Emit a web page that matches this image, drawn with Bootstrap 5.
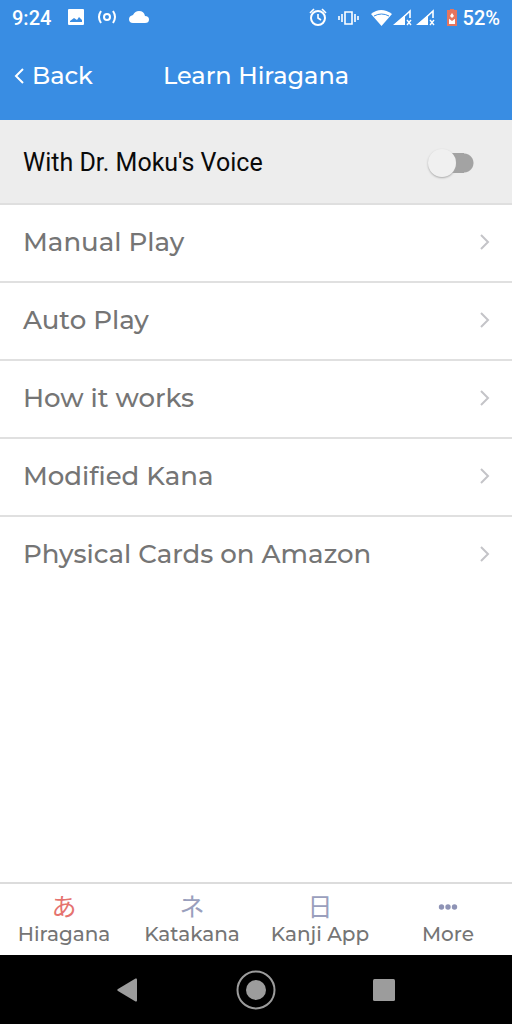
<!DOCTYPE html>
<html lang="en">
<head>
<meta charset="utf-8">
<meta name="viewport" content="width=device-width, initial-scale=1">
<title>Learn Hiragana</title>
<link href="https://cdn.jsdelivr.net/npm/bootstrap@5.3.0/dist/css/bootstrap.min.css" rel="stylesheet">
<style>
  body { font-family: Montserrat, Inter, sans-serif; font-weight: 500; color: #757575; }
  svg { display: block; flex: none; }
  .top-area { background: #398de3; color: #fff; }
  .status-bar { height: 36px; padding: 0 12px; font: 500 20px/36px Roboto, sans-serif; }
  .title-bar { height: 84px; padding: 0 14px 4px; font-size: 24px; line-height: 32px; }
  .title-bar h1 { font-size: 24px; line-height: 32px; font-weight: 500; }
  .voice-row { height: 85px; padding: 2px 38px 0 23px; background: #ededed; border-bottom: 2px solid #dfdfdf; }
  .voice-row label { font: 400 25px/32px Roboto, sans-serif; color: #0a0a0a; }
  .voice-switch { appearance: none; display: flex; align-items: center; width: 46px; height: 30px; margin: 0; border-radius: 15px; background: linear-gradient(#a3a3a3, #a3a3a3) 15px 5px / 21px 20px no-repeat, radial-gradient(circle at 36px 15px, #a3a3a3 9px, transparent 10px); }
  .voice-switch::before { content: ""; width: 28px; height: 28px; border-radius: 50%; background: #f0f0f0; box-shadow: 0 1px 2px #aaa; }
  .voice-switch:checked { transform: scaleX(-1); }
  .menu-list .list-group-item { height: 78px; padding: 0 22px 2px 23px; border-color: #e0e0e0; border-width: 0 0 2px; color: #757575; font-size: 26px; line-height: 32px; }
  .menu-list .list-group-item:last-child { height: 76px; border-bottom-width: 0; }
  .tab-bar { height: 73px; border-top: 2px solid #dcdcdc; padding-top: 9px; }
  .tab-bar a { color: #757575; font-size: 20px; line-height: 26px; }
  .tab-icon { height: 28px; font: 400 25px/25px "Noto Sans CJK JP", sans-serif; color: #9a9fbd; }
  .active .tab-icon { color: #e5736f; }
  .system-bar { height: 69px; padding: 0 64px; }
</style>
</head>
<body class="d-flex flex-column min-vh-100 bg-white">
<header class="top-area">
  <div class="status-bar d-flex align-items-center justify-content-between">
    <div class="d-flex align-items-center">
      <span>9:24</span>
      <svg class="ms-3" width="84" height="20" viewBox="0 0 84 20" fill="none" stroke="#fff" stroke-width="2">
        <path fill="#fff" stroke="none" fill-rule="evenodd" d="M2 1h14q1 0 1 1v14q0 1-1 1H2q-1 0-1-1V2q0-1 1-1Zm1 13h12v-2l-3-3-2 3-3-2-4 3Z"/>
        <circle cx="40" cy="9" r="3"/><path d="M34 3q-4 6 0 12M46 3q4 6 0 12"/>
        <path fill="#fff" stroke="none" d="M66 15q-4 0-4-4 0-3 4-4 2-4 6-4 5 0 6 5 4 0 4 3.500T78 15Z"/>
      </svg>
    </div>
    <div class="d-flex align-items-center gap-1">
      <svg width="150" height="20" viewBox="0 0 150 20" fill="none" stroke="#fff" stroke-width="2">
        <circle cx="9" cy="10" r="7"/><path d="M9 6v4l3 2M1 5l4-4M13 1l4 4" stroke-width="1.6"/>
        <path d="M36 4h7v12h-7ZM33 6v8M46 6v8M30 8v4M49 8v4" stroke-width="1.6"/>
        <path fill="#fff" stroke="none" d="M62 6q10-8 21 0L72.500 18Z"/><path d="M65 8q7.500-4 15 0" stroke="#398de3" stroke-width="1"/>
        <g id="signal"><path d="M87 16 101 3v7" stroke-width="1.600"/><path fill="#fff" stroke="none" d="M84 17 96 7v10Z"/><path d="m98 12 4 5m0-5-4 5" stroke-width="1.400"/></g>
        <use href="#signal" x="23"/>
        <path fill="#fff" stroke="#e5755f" d="M139 3h8v14h-8Z"/><path fill="#e5755f" stroke="none" d="M141 1h4v3h-4ZM139 4h8v6l-4 3-4-3Z"/><path fill="#fff" stroke="none" d="m143 5 2 3-2 2-2-2Z"/>
      </svg>
      <span>52%</span>
    </div>
  </div>
  <div class="title-bar row g-0 align-items-center">
    <div class="col">
      <a href="#" class="d-flex align-items-center gap-2 text-white text-decoration-none">
        <svg width="10" height="18" viewBox="0 0 10 18" fill="none" stroke="#fff" stroke-width="2"><path d="m9 2-7 7 7 7"/></svg>Back
      </a>
    </div>
    <h1 class="col-auto m-0">Learn Hiragana</h1>
    <div class="col"></div>
  </div>
</header>
<main class="flex-grow-1">
  <div class="voice-row d-flex align-items-center justify-content-between">
    <label for="voice">With Dr. Moku's Voice</label>
    <input class="voice-switch" type="checkbox" role="switch" id="voice">
  </div>
  <nav class="menu-list list-group list-group-flush" aria-label="Lessons">
    <a href="#" class="list-group-item list-group-item-action d-flex align-items-center justify-content-between">Manual Play<svg width="10" height="16" viewBox="0 0 10 16" fill="none" stroke="#c4c4c8" stroke-width="2"><path d="m1 1 7 7-7 7"/></svg></a>
    <a href="#" class="list-group-item list-group-item-action d-flex align-items-center justify-content-between">Auto Play<svg width="10" height="16" viewBox="0 0 10 16" fill="none" stroke="#c4c4c8" stroke-width="2"><path d="m1 1 7 7-7 7"/></svg></a>
    <a href="#" class="list-group-item list-group-item-action d-flex align-items-center justify-content-between">How it works<svg width="10" height="16" viewBox="0 0 10 16" fill="none" stroke="#c4c4c8" stroke-width="2"><path d="m1 1 7 7-7 7"/></svg></a>
    <a href="#" class="list-group-item list-group-item-action d-flex align-items-center justify-content-between">Modified Kana<svg width="10" height="16" viewBox="0 0 10 16" fill="none" stroke="#c4c4c8" stroke-width="2"><path d="m1 1 7 7-7 7"/></svg></a>
    <a href="#" class="list-group-item list-group-item-action d-flex align-items-center justify-content-between">Physical Cards on Amazon<svg width="10" height="16" viewBox="0 0 10 16" fill="none" stroke="#c4c4c8" stroke-width="2"><path d="m1 1 7 7-7 7"/></svg></a>
  </nav>
</main>
<footer>
  <nav class="tab-bar row g-0 text-center" aria-label="Sections">
    <a href="#" class="col-3 text-decoration-none active" aria-current="page"><div class="tab-icon" lang="ja">あ</div>Hiragana</a>
    <a href="#" class="col-3 text-decoration-none"><div class="tab-icon" lang="ja">ネ</div>Katakana</a>
    <a href="#" class="col-3 text-decoration-none"><div class="tab-icon" lang="ja">日</div>Kanji App</a>
    <a href="#" class="col-3 text-decoration-none"><div class="tab-icon d-flex align-items-center justify-content-center"><svg width="20" height="6" viewBox="0 0 20 6" fill="#8e93b5"><circle cx="3.500" cy="3" r="2.700"/><circle cx="10" cy="3" r="2.700"/><circle cx="16.500" cy="3" r="2.700"/></svg></div>More</a>
  </nav>
  <div class="system-bar bg-black row g-0 align-items-center">
    <div class="col-4"><button class="btn p-0 border-0 d-block mx-auto" aria-label="Back"><svg width="22" height="24" viewBox="0 0 22 24" fill="#9c9c9c"><path d="M1 11 18.500.600q1.500-.600 1.500 1v20.800q0 1.600-1.500 1L1 13q-1.500-1 0-2Z"/></svg></button></div>
    <div class="col-4"><button class="btn p-0 border-0 d-block mx-auto" aria-label="Home"><svg width="40" height="40" viewBox="0 0 40 40"><circle cx="20" cy="20" r="18.500" fill="none" stroke="#9c9c9c" stroke-width="2"/><circle cx="20" cy="20" r="10" fill="#9c9c9c"/></svg></button></div>
    <div class="col-4"><button class="btn p-0 border-0 d-block mx-auto" aria-label="Recent apps"><svg width="22" height="22" viewBox="0 0 22 22" fill="#9c9c9c"><rect width="22" height="22" rx="1.500"/></svg></button></div>
  </div>
</footer>
<script src="https://cdn.jsdelivr.net/npm/bootstrap@5.3.0/dist/js/bootstrap.bundle.min.js"></script>
</body>
</html>
